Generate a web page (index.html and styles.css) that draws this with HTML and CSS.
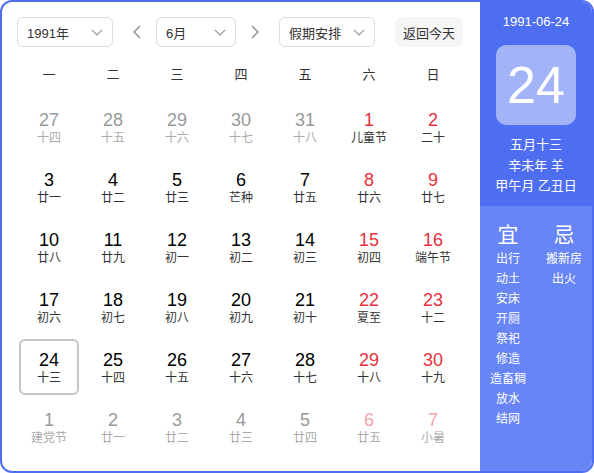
FILE: index.html
```html
<!DOCTYPE html>
<html lang="zh-CN">
<head>
<meta charset="utf-8">
<title>万年历</title>
<link rel="stylesheet" href="styles.css">
</head>
<body>
<div class="cal">
  <div class="main">
    <div class="toolbar">
      <div class="select sel-year"><span>1991年</span><svg class="chev" viewBox="0 0 12 7" width="12" height="7"><path d="M1 1l5 5 5-5" fill="none" stroke="#999" stroke-width="1.2"/></svg></div>
      <div class="arrow prev"><svg viewBox="0 0 8 14" width="8" height="14"><path d="M7 1L1 7l6 6" fill="none" stroke="#888" stroke-width="1.3"/></svg></div>
      <div class="select sel-month"><span>6月</span><svg class="chev" viewBox="0 0 12 7" width="12" height="7"><path d="M1 1l5 5 5-5" fill="none" stroke="#999" stroke-width="1.2"/></svg></div>
      <div class="arrow next"><svg viewBox="0 0 8 14" width="8" height="14"><path d="M1 1l6 6-6 6" fill="none" stroke="#888" stroke-width="1.3"/></svg></div>
      <div class="select sel-holiday"><span>假期安排</span><svg class="chev" viewBox="0 0 12 7" width="12" height="7"><path d="M1 1l5 5 5-5" fill="none" stroke="#999" stroke-width="1.2"/></svg></div>
      <div class="today-btn">返回今天</div>
    </div>
    <div class="weekdays">
      <div>一</div><div>二</div><div>三</div><div>四</div><div>五</div><div>六</div><div>日</div>
    </div>
    <div class="grid">
      <div class="cell other"><b>27</b><i>十四</i></div>
      <div class="cell other"><b>28</b><i>十五</i></div>
      <div class="cell other"><b>29</b><i>十六</i></div>
      <div class="cell other"><b>30</b><i>十七</i></div>
      <div class="cell other"><b>31</b><i>十八</i></div>
      <div class="cell wk"><b>1</b><i>儿童节</i></div>
      <div class="cell wk"><b>2</b><i>二十</i></div>

      <div class="cell"><b>3</b><i>廿一</i></div>
      <div class="cell"><b>4</b><i>廿二</i></div>
      <div class="cell"><b>5</b><i>廿三</i></div>
      <div class="cell"><b>6</b><i>芒种</i></div>
      <div class="cell"><b>7</b><i>廿五</i></div>
      <div class="cell wk"><b>8</b><i>廿六</i></div>
      <div class="cell wk"><b>9</b><i>廿七</i></div>

      <div class="cell"><b>10</b><i>廿八</i></div>
      <div class="cell"><b>11</b><i>廿九</i></div>
      <div class="cell"><b>12</b><i>初一</i></div>
      <div class="cell"><b>13</b><i>初二</i></div>
      <div class="cell"><b>14</b><i>初三</i></div>
      <div class="cell wk"><b>15</b><i>初四</i></div>
      <div class="cell wk"><b>16</b><i>端午节</i></div>

      <div class="cell"><b>17</b><i>初六</i></div>
      <div class="cell"><b>18</b><i>初七</i></div>
      <div class="cell"><b>19</b><i>初八</i></div>
      <div class="cell"><b>20</b><i>初九</i></div>
      <div class="cell"><b>21</b><i>初十</i></div>
      <div class="cell wk"><b>22</b><i>夏至</i></div>
      <div class="cell wk"><b>23</b><i>十二</i></div>

      <div class="cell sel"><b>24</b><i>十三</i></div>
      <div class="cell"><b>25</b><i>十四</i></div>
      <div class="cell"><b>26</b><i>十五</i></div>
      <div class="cell"><b>27</b><i>十六</i></div>
      <div class="cell"><b>28</b><i>十七</i></div>
      <div class="cell wk"><b>29</b><i>十八</i></div>
      <div class="cell wk"><b>30</b><i>十九</i></div>

      <div class="cell other"><b>1</b><i>建党节</i></div>
      <div class="cell other"><b>2</b><i>廿一</i></div>
      <div class="cell other"><b>3</b><i>廿二</i></div>
      <div class="cell other"><b>4</b><i>廿三</i></div>
      <div class="cell other"><b>5</b><i>廿四</i></div>
      <div class="cell other wk"><b>6</b><i>廿五</i></div>
      <div class="cell other wk"><b>7</b><i>小暑</i></div>
    </div>
  </div>
  <div class="side">
    <div class="side-top">
      <div class="side-date">1991-06-24</div>
      <div class="big-day">24</div>
      <div class="lunar-info">
        <div>五月十三</div>
        <div>辛未年 羊</div>
        <div>甲午月 乙丑日</div>
      </div>
    </div>
    <div class="side-bottom">
      <div class="yj-col">
        <div class="yj-title">宜</div>
        <div>出行</div><div>动土</div><div>安床</div><div>开厕</div><div>祭祀</div><div>修造</div><div>造畜稠</div><div>放水</div><div>结网</div>
      </div>
      <div class="yj-col">
        <div class="yj-title">忌</div>
        <div>搬新房</div><div>出火</div>
      </div>
    </div>
  </div>
</div>
</body>
</html>
```

FILE: styles.css
```css
* { box-sizing: border-box; }
html, body { margin: 0; padding: 0; background: #fff; }
body {
  font-family: "Liberation Sans", "Noto Sans CJK SC", sans-serif;
  color: #333;
}
.cal {
  width: 594px;
  height: 473px;
  border: 2px solid #4e6ef2;
  border-radius: 12px;
  display: flex;
  overflow: hidden;
}
.main {
  width: 478px;
  flex: none;
  padding: 15px 0 0 15px;
}
.toolbar {
  display: flex;
  align-items: center;
  height: 30px;
}
.select {
  height: 30px;
  border: 1px solid #dcdcdc;
  border-radius: 6px;
  display: flex;
  align-items: center;
  justify-content: space-between;
  padding: 0 9px 0 9px;
  font-size: 13px;
  color: #333;
}
.sel-year { width: 96px; }
.sel-month { width: 80px; }
.sel-holiday { width: 96px; }
.chev { display: block; }
.arrow {
  width: 24px;
  height: 30px;
  display: flex;
  align-items: center;
  justify-content: center;
}
.prev { margin: 0 7px 0 12px; }
.next { margin: 0 12px 0 7px; }
.today-btn {
  margin-left: 20px;
  width: 68px;
  height: 30px;
  border-radius: 6px;
  background: #f5f5f6;
  font-size: 13px;
  color: #333;
  display: flex;
  align-items: center;
  justify-content: center;
}
.weekdays {
  display: grid;
  grid-template-columns: repeat(7, 64px);
  height: 52px;
  align-items: center;
  font-size: 13px;
  color: #333;
  text-align: center;
  padding-top: 1px;
}
.grid {
  display: grid;
  grid-template-columns: repeat(7, 64px);
  grid-auto-rows: 60px;
}
.cell {
  width: 60px;
  height: 56px;
  margin: 0 auto;
  border: 2px solid transparent;
  border-radius: 6px;
  display: flex;
  flex-direction: column;
  align-items: center;
  padding-top: 9px;
}
.cell b {
  font-weight: normal;
  font-size: 18px;
  line-height: 20px;
  color: #000;
}
.cell i {
  font-style: normal;
  font-size: 12px;
  line-height: 16px;
  color: #333;
}
.cell.wk b { color: #e8313d; }
.cell.other b { color: #999; }
.cell.other i { color: #aaa; }
.cell.other.wk b { color: #f2a2a8; }
.cell.sel { border-color: #c6c6c6; }

.side {
  width: 112px;
  flex: none;
  color: #fff;
  display: flex;
  flex-direction: column;
}
.side-top {
  background: #4e6ef2;
  height: 204px;
  display: flex;
  flex-direction: column;
  align-items: center;
  padding-top: 12px;
}
.side-date {
  font-size: 13px;
  line-height: 16px;
}
.big-day {
  margin-top: 15px;
  width: 80px;
  height: 80px;
  border-radius: 10px;
  background: #a3b3f8;
  font-size: 52px;
  line-height: 80px;
  text-align: center;
}
.lunar-info {
  margin-top: 10px;
  font-size: 13px;
  line-height: 20.5px;
  text-align: center;
}
.side-bottom {
  flex: 1;
  background: #6785f4;
  display: flex;
  padding-top: 16px;
}
.yj-col {
  width: 56px;
  text-align: center;
  font-size: 12px;
  line-height: 20px;
}
.yj-title {
  font-size: 21px;
  line-height: 26px;
  margin-bottom: 1px;
}
```
